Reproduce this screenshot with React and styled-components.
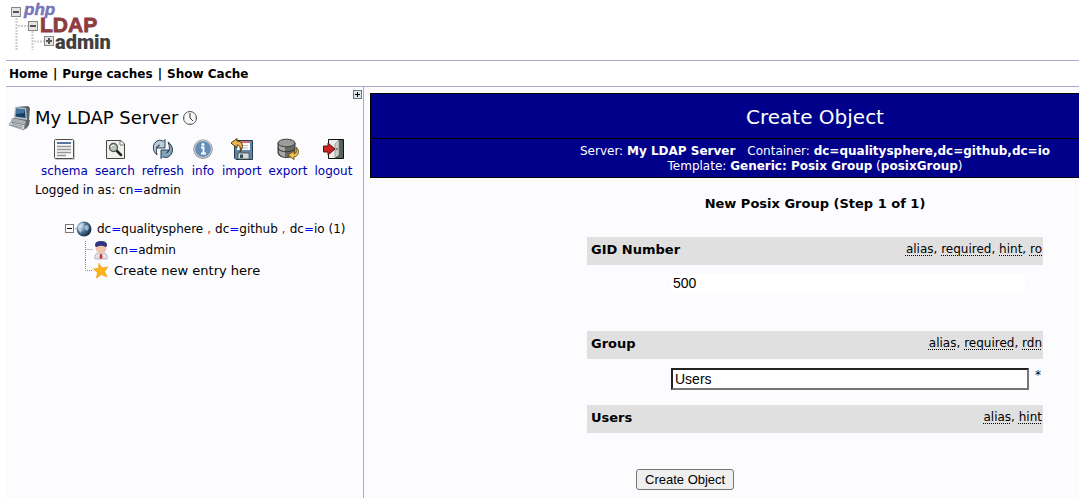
import React from 'react';
import styled, { createGlobalStyle } from 'styled-components';

const Global = createGlobalStyle`
  body {
    margin: 0;
    background: #fff;
    color: #000;
    font-family: "DejaVu Sans", Verdana, sans-serif;
    font-size: 12px;
    line-height: 16px;
    overflow-x: hidden;
  }
  a { color: inherit; text-decoration: none; }
`;

const Page = styled.div`
  display: flex;
  flex-direction: column;
  min-height: 100vh;
  padding-left: 6px;
  overflow-x: hidden;
`;

const Header = styled.header`
  height: 60px;
  svg { display: block; }
`;

const MenuBar = styled.nav`
  display: flex;
  gap: 5px;
  padding: 5px 3px 4px;
  border: solid #aaaacc;
  border-width: 1px 0;
  font-weight: bold;
`;

const Columns = styled.div`
  display: flex;
  flex: 1;
  background: #fcfcff;
`;

const Sidebar = styled.aside`
  flex: 0 0 357px;
  border-right: 1px solid #aaaacc;
`;

const ToggleRow = styled.div`
  display: flex;
  justify-content: flex-end;
  padding: 3px 1px 0 0;
`;

const IconButton = styled.button`
  display: block;
  padding: 0;
  border: 0;
  background: none;
  svg { display: block; }
`;

const ServerTitle = styled.h1`
  display: flex;
  align-items: center;
  gap: 4px;
  margin: 5px 0 0 3px;
  font-size: 18px;
  line-height: 28px;
  font-weight: normal;
`;

const Tools = styled.div`
  display: flex;
  gap: 7px;
  margin: 5px 0 0 35px;
`;

const Tool = styled.a`
  display: flex;
  flex-direction: column;
  align-items: center;
  color: #0000aa;
  line-height: 20px;
`;

const LoggedIn = styled.div`
  margin: 1px 0 0 29px;
`;

const Eq = styled.span`
  color: ${(p) => (p.$comma ? '#f00' : '#00f')};
  padding: 0 ${(p) => (p.$comma ? '4px' : '0')};
`;

const Tree = styled.ul`
  list-style: none;
  margin: 20px 0 0 58px;
  padding: 0;
`;

const TreeRow = styled.li`
  display: flex;
  align-items: center;
  height: 21px;
  padding-left: ${(p) => (p.$nested ? '20px' : '0')};
  font-size: ${(p) => (p.$action ? '13px' : '12px')};
  a { margin-left: 5px; }
`;

const Main = styled.main`
  flex: 1 0 auto;
  min-width: 890px;
  margin: 6px 0 0 6px;
`;

const Banner = styled.div`
  border: 1px solid #000;
  background: #00008b;
  color: #fff;
  text-align: center;
`;

const BannerTitle = styled.h2`
  margin: 0;
  padding-top: 2px;
  border-bottom: 1px solid #000;
  font-size: 20px;
  line-height: 42px;
  font-weight: normal;
`;

const BannerInfo = styled.div`
  padding: 5px 0 3px;
  line-height: 15px;
  span { margin-right: 12px; }
`;

const Step = styled.h3`
  margin: 18px 0 25px;
  text-align: center;
  font-size: 13px;
  line-height: 16px;
`;

const Form = styled.form`
  width: 456px;
  margin: 0 auto;
`;

const FieldHead = styled.div`
  display: flex;
  justify-content: space-between;
  padding: 5px 1px 7px 4px;
  background: #e0e0e0;
  label, strong { font-weight: bold; font-size: 13px; }
`;

const Flags = styled.span`
  line-height: 14px;
  abbr {
    text-decoration: underline dotted 1px;
    text-underline-offset: 2px;
  }
`;

const FieldBody = styled.div`
  display: flex;
  align-items: flex-start;
  gap: 6px;
  padding: 9px 0 ${(p) => (p.$tall ? '39px' : '15px')} 84px;
`;

const Required = styled.span`
  line-height: 14px;
`;

const Input = styled.input`
  box-sizing: border-box;
  width: ${(p) => (p.readOnly ? '354px' : '358px')};
  height: ${(p) => (p.readOnly ? '18px' : '22px')};
  margin: 0;
  padding: 1px 2px;
  border: ${(p) => (p.readOnly ? '0' : '2px solid')};
  border-color: #222 #767676 #767676 #222;
  background: #fff;
  color: #000;
  font: 14px "Liberation Sans", Arial, sans-serif;
`;

const Submit = styled.button`
  display: block;
  margin: 36px 0 0 49px;
  height: 21px;
  padding: 0 8px;
  border: 1px solid #767676;
  border-radius: 3px;
  background: #efefef;
  color: #000;
  font: 13px "Liberation Sans", Arial, sans-serif;
`;

function Logo() {
  return (
    <svg width="110" height="56" viewBox="6 0 110 56" role="img" aria-label="phpLDAPadmin">
      <g stroke="#ccc" strokeWidth="2" strokeDasharray="2 1" fill="none">
        <path d="M16.500 18V50M32.500 31V50M18 26H28M34 41.500H44" />
      </g>
      <g fill="#e4e4e4" stroke="#888">
        <rect x="11.500" y="7.500" width="9" height="9" />
        <rect x="28.500" y="21.500" width="9" height="9" />
        <rect x="44.500" y="36.500" width="9" height="9" />
      </g>
      <path d="M13 12H19M30 26H36M46 41H52M49 38V44" stroke="#555" strokeWidth="2" />
      <g fontFamily="Liberation Sans, Arial, sans-serif" fontWeight="bold">
        <text x="24" y="15" fontSize="17" fontStyle="italic" fill="#7777b8" stroke="#7777b8" strokeWidth=".5">php</text>
        <text x="40" y="32" fontSize="21" fill="#8d3c40" stroke="#8d3c40" strokeWidth=".8">LDAP</text>
        <text x="55" y="49" fontSize="20" fontFamily="Roboto, sans-serif" fontWeight="900" fill="#404040">admin</text>
      </g>
    </svg>
  );
}

const PlusBox = () => (
  <svg width="9" height="9"><rect x=".5" y=".5" width="8" height="8" fill="#dde8ee" stroke="#68777f" /><path d="M2 4.500H7M4.500 2V7" stroke="#000" /></svg>
);

const Computer = () => (
  <svg width="22" height="26" viewBox="0 0 22 26">
    <path d="M7 2L19 1 21 3 20 16 17 17 5 14Z" fill="#59646b" />
    <path d="M6 2L17 3 18 15 5 13Z" fill="#b9c1c4" />
    <path d="M7 3.500L16 4.500 16.500 13 6.500 11.500Z" fill="#173e66" />
    <path d="M7 3.500L16 4.500 15 8 7 9Z" fill="#41759f" />
    <path d="M3 13L17 16 21 15 20 20 17 24 2 19Z" fill="#5d686d" />
    <path d="M3 13L17 16 16 20 2 17Z" fill="#a9b1b3" />
    <path d="M2 17L16 20 15 25 0 20Z" fill="#d4d8d9" stroke="#727c81" strokeWidth=".7" />
    <path d="M3 18.500L14 21.500M2 20L13 23" stroke="#7b8589" strokeWidth=".8" />
  </svg>
);

const Clock = () => (
  <svg width="16" height="16" viewBox="0 0 16 16">
    <circle cx="8" cy="8" r="6.500" fill="#f7f7f7" stroke="#555" />
    <path d="M8 3V8L11 11" fill="none" stroke="#333" />
    <path d="M14 8H13M2 8H3M8 13V14" stroke="#999" />
  </svg>
);

const ICONS = {
  schema: (
    <>
      <rect x="3" y="3" width="20" height="20" rx="1" fill="#ccc" />
      <rect x="2.500" y="2.500" width="19" height="19" rx="1" fill="#f8f8f8" stroke="#4b4d4a" />
      <path d="M5 6H19" stroke="#5878a4" strokeWidth="2" />
      <path d="M5 9.500H19M5 12.500H19M5 15.500H19M5 18.500H14" stroke="#929994" strokeWidth="1.400" />
    </>
  ),
  search: (
    <>
      <path d="M3.500 3.500H18L21.500 7V21.500H3.500Z" fill="#f0f0ed" stroke="#444843" />
      <path d="M17 4V8H21" fill="#fff" stroke="#777" />
      <path d="M13 13L18 18" stroke="#222" strokeWidth="2.500" strokeLinecap="round" />
      <circle cx="10.500" cy="10.500" r="4" fill="#b9c4ba" stroke="#555" strokeWidth="1.300" />
      <path d="M8 10Q9 8 11 8" stroke="#fff" fill="none" />
    </>
  ),
  refresh: (
    <g stroke="#2a3f50" strokeLinejoin="round">
      <path d="M6 18C1 14 1 6 7 3.500C9 2.700 11 3.500 12 4.500L14 2.500V11H6L8.500 8C5.500 8.500 4.500 12 6 18Z" fill="#b9cddd" />
      <path d="M17 5C23 9 23 17 17 20C15 21 13 20.500 12 19.500L10 21.500V13H18L15.500 16C18.500 15 19.500 11 17 5Z" fill="#83a3bd" />
    </g>
  ),
  info: (
    <>
      <circle cx="12" cy="12.500" r="9.500" fill="#bbb" />
      <circle cx="12" cy="12" r="8.500" fill="#668db8" stroke="#eee" />
      <circle cx="12" cy="12" r="9.200" fill="none" stroke="#777" strokeWidth=".7" />
      <path d="M10 10.500H12.500V16.500M10 16.500H15" stroke="#fff" strokeWidth="1.800" fill="none" />
      <circle cx="12" cy="7.500" r="1.500" fill="#fff" />
    </>
  ),
  import: (
    <>
      <path d="M4.500 3.500H22.500V22.500H6L4.500 21Z" fill="#5e84ab" stroke="#273b50" />
      <path d="M7 4H20V13H7Z" fill="#fff" />
      <path d="M7 4H20V6H7Z" fill="#d8706a" />
      <path d="M9 8.500H18M9 11H18" stroke="#bbb" />
      <path d="M8 16H19V22H8Z" fill="#d5d7d4" stroke="#444" strokeWidth=".7" />
      <path d="M10 17.500H13V21H10Z" fill="#334a61" />
      <path d="M1 6L7 1.500V4C13 4 14 10 10 15C11 11 10 8 7 8V11Z" fill="#e9b64b" stroke="#493814" strokeLinejoin="round" />
    </>
  ),
  export: (
    <>
      <path d="M2 6V16C3 22 18 22 19 16V6Z" fill="#686a67" stroke="#343634" />
      <path d="M3 7V16C4 18 7 20 9 20V8Z" fill="#a6a8a4" />
      <ellipse cx="10.500" cy="6" rx="8.500" ry="3.800" fill="#9c9e9b" stroke="#3b3d3b" />
      <path d="M2 11C3 16 18 16 19 11" fill="none" stroke="#333" />
      <path d="M20 10C24 13 23 19 18 20V22.500L12 18 18 14V17C21 16 21 13 20 10Z" fill="#efbd51" stroke="#775a19" strokeLinejoin="round" />
    </>
  ),
  logout: (
    <>
      <path d="M7.500 2.500H22.500V21.500H7.500Z" fill="#26352b" stroke="#111" />
      <path d="M16 3H22V21H16Z" fill="#53655a" />
      <path d="M8 3H18V17L14 21H8Z" fill="#eceeea" />
      <path d="M14 7L18 3V18L14 21Z" fill="#cbcfc8" stroke="#777" strokeWidth=".6" />
      <path d="M16 11V13" stroke="#444" />
      <path d="M2.500 9H7V6L14 12 7 18V15H2.500Z" fill="#c52623" stroke="#5e1110" />
    </>
  ),
};

const ToolIcon = ({ name }) => <svg width="24" height="24" viewBox="0 0 24 24">{ICONS[name]}</svg>;

const MinusBox = () => (
  <svg width="12" height="21">
    <rect x="1.500" y="6.500" width="8" height="8" fill="#fff" stroke="#777" />
    <path d="M3 10.500H8" stroke="#000" /><path d="M11 10.500H12" stroke="#888" />
  </svg>
);

const Branch = ({ last }) => (
  <svg width="9" height="21">
    <path d={last ? 'M1.500 0V10.500H9' : 'M1.500 2V21M1.500 10.500H9'} fill="none" stroke="#888" strokeDasharray="1 1" />
  </svg>
);

const Globe = () => (
  <svg width="16" height="16" viewBox="0 0 16 16">
    <defs>
      <radialGradient id="globe" cx=".3" cy=".35" r=".75">
        <stop offset="0" stopColor="#c9dcec" /><stop offset=".5" stopColor="#4d7399" /><stop offset="1" stopColor="#102238" />
      </radialGradient>
    </defs>
    <circle cx="8" cy="8" r="7.500" fill="url(#globe)" />
    <path d="M2 5Q5 1 8 2L7 5 4 7 6 9 5 12Q1 9 2 5M9 5L12 4 13 7 11 10 9 8Z" fill="#dce6ec" opacity=".6" />
  </svg>
);

const Person = () => (
  <svg width="16" height="20" viewBox="0 0 16 20">
    <path d="M2 19Q1 13 6 13H10Q15 13 14 19Z" fill="#e2e3ea" stroke="#9b9eae" strokeWidth=".7" />
    <ellipse cx="8" cy="8" rx="5.500" ry="5.500" fill="#f1c4ac" />
    <path d="M2 5Q2 1 8 1Q14 1 14 5Q14 7 12.500 7Q8 4.500 3.500 7Q2 7 2 5Z" fill="#30357f" />
    <path d="M7 14H9L9.500 18 8 19 6.500 18Z" fill="#d62f30" />
  </svg>
);

const Star = () => (
  <svg width="16" height="16" viewBox="0 0 16 16">
    <path d="M6 .500L9 5 15 4 11.500 8.500 14 14 8.500 11.500 3.500 15 4.500 9.500 .500 6 5.500 5.500Z" fill="#fbb616" stroke="#f09a16" strokeWidth=".7" />
  </svg>
);

function Field({ id, title, flags, children, tall }) {
  return (
    <>
      <FieldHead>
        {children ? <label htmlFor={id}>{title}</label> : <strong>{title}</strong>}
        <Flags>
          {flags.map((f, i) => (
            <React.Fragment key={f}>{i > 0 && ', '}<abbr>{f}</abbr></React.Fragment>
          ))}
        </Flags>
      </FieldHead>
      {children && <FieldBody $tall={tall}>{children}</FieldBody>}
    </>
  );
}

export default function App() {
  return (
    <>
      <Global />
      <Page>
        <Header><Logo /></Header>
        <MenuBar>
          <a href="#home">Home</a><span>|</span>
          <a href="#purge">Purge caches</a><span>|</span>
          <a href="#cache">Show Cache</a>
        </MenuBar>
        <Columns>
          <Sidebar>
            <ToggleRow><IconButton aria-label="Expand"><PlusBox /></IconButton></ToggleRow>
            <ServerTitle><Computer />My LDAP Server<Clock /></ServerTitle>
            <Tools>
              {Object.keys(ICONS).map((name) => (
                <Tool key={name} href={`#${name}`}><ToolIcon name={name} />{name}</Tool>
              ))}
            </Tools>
            <LoggedIn>Logged in as: cn<Eq>=</Eq>admin</LoggedIn>
            <Tree>
              <TreeRow>
                <MinusBox /><Globe />
                <a href="#base">dc<Eq>=</Eq>qualitysphere<Eq $comma>,</Eq>dc<Eq>=</Eq>github<Eq $comma>,</Eq>dc<Eq>=</Eq>io (1)</a>
              </TreeRow>
              <TreeRow $nested><Branch /><Person /><a href="#admin">cn<Eq>=</Eq>admin</a></TreeRow>
              <TreeRow $nested $action><Branch last /><Star /><a href="#new">Create new entry here</a></TreeRow>
            </Tree>
          </Sidebar>
          <Main>
            <Banner>
              <BannerTitle>Create Object</BannerTitle>
              <BannerInfo>
                <span>Server: <b>My LDAP Server</b></span>Container: <b>dc=qualitysphere,dc=github,dc=io</b>
                <br />
                Template: <b>Generic: Posix Group</b> (<b>posixGroup</b>)
              </BannerInfo>
            </Banner>
            <Step>New Posix Group (Step 1 of 1)</Step>
            <Form onSubmit={(e) => e.preventDefault()}>
              <Field id="gid" title="GID Number" flags={['alias', 'required', 'hint', 'ro']} tall>
                <Input id="gid" readOnly value="500" />
              </Field>
              <Field id="group" title="Group" flags={['alias', 'required', 'rdn']}>
                <Input id="group" defaultValue="Users" /><Required>*</Required>
              </Field>
              <Field title="Users" flags={['alias', 'hint']} />
              <Submit type="submit">Create Object</Submit>
            </Form>
          </Main>
        </Columns>
      </Page>
    </>
  );
}
